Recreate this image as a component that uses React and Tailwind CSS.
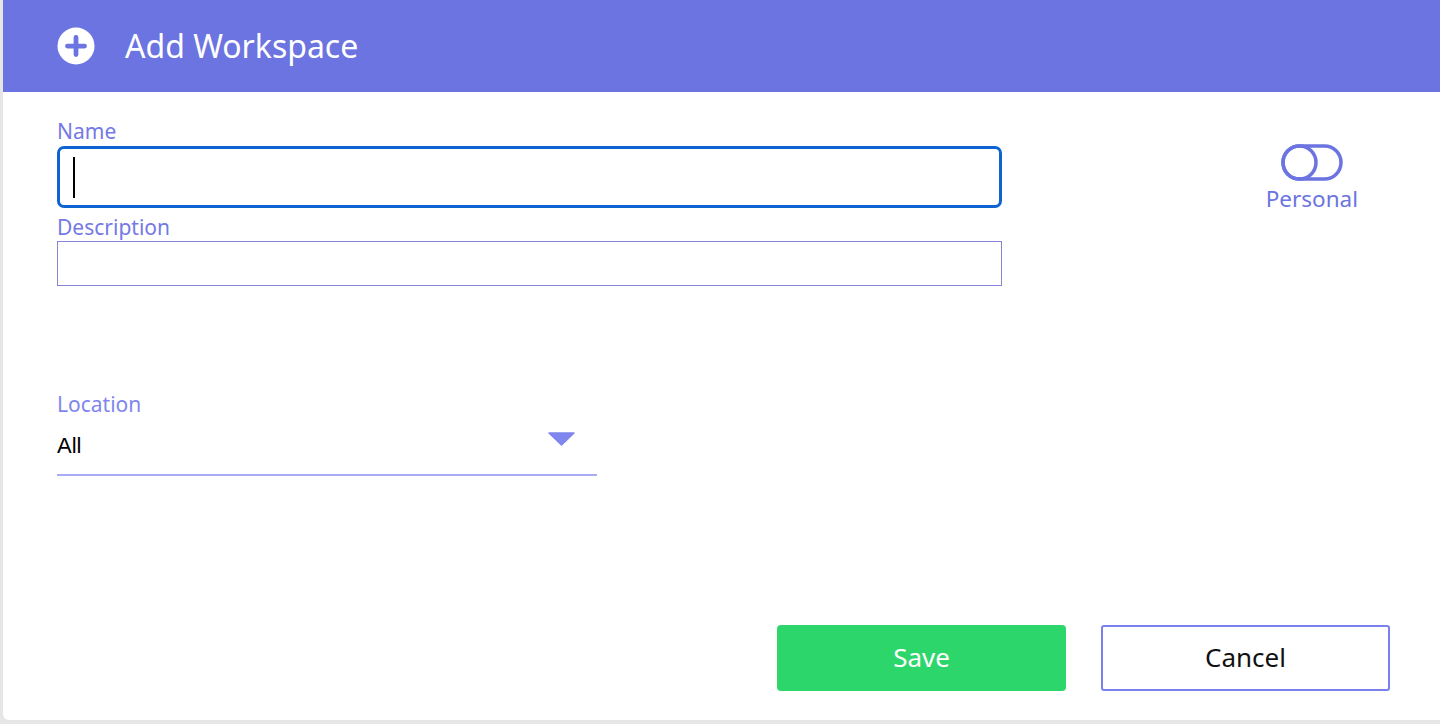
import React from "react";

export default function App() {
  return (
    <div className="w-[1440px] h-[724px] bg-[#e6e6e6] overflow-hidden" style={{ fontFamily: '"Noto Sans", "Open Sans", sans-serif' }}>
      <div className="ml-[3px] w-[1437px] h-[720px] bg-white rounded-bl-[6px] flex flex-col">
        <div className="h-[92px] bg-[#6b74e0] flex items-center pl-[54px] shrink-0">
          <svg width="38" height="38" viewBox="0 0 40 40">
            <circle cx="20" cy="20" r="19.5" fill="white" />
            <path d="M20 11v18M11 20h18" stroke="#6b74e0" strokeWidth="5" strokeLinecap="round" />
          </svg>
          <span className="ml-[30px] text-white text-[32px] leading-none">Add Workspace</span>
        </div>
        <div className="flex-1 flex flex-col px-[54px] relative">
          <div className="flex">
            <div className="w-[945px]">
              <div className="mt-[28px] text-[21px] leading-[23px] text-[#7479e6]">Name</div>
              <div className="mt-[3px] h-[62px] border-[3px] border-[#0c63d1] rounded-[7px] flex items-center pl-[13px]">
                <div className="w-[2px] h-[41px] bg-black" />
              </div>
              <div className="mt-[8px] text-[21px] leading-[23px] text-[#7479e6]">Description</div>
              <div className="mt-[2px] h-[45px] border border-[#8585d8]" />
            </div>
            <div className="flex-1 flex flex-col items-end pr-[28px] pt-[52px]">
              <div className="flex flex-col items-center">
                <svg width="62" height="37" viewBox="0 0 62 37">
                  <rect x="2" y="2" width="58" height="33" rx="16.5" fill="none" stroke="#6b74e0" strokeWidth="3.5" />
                  <circle cx="18.5" cy="18.5" r="16.5" fill="none" stroke="#6b74e0" strokeWidth="3.5" />
                </svg>
                <span className="mt-[5px] text-[22.5px] leading-[26px] text-[#6b74e0]">Personal</span>
              </div>
            </div>
          </div>
          <div className="mt-[107px] w-[540px]">
            <div className="text-[21px] leading-[23px] text-[#7f86ee]">Location</div>
            <div className="relative h-[60px] border-b-2 border-[#a8acf4]">
              <span className="absolute left-0 top-[17px] text-[22px] leading-[26px] text-black" style={{ fontFamily: '"Liberation Sans", Arial, sans-serif' }}>All</span>
              <svg className="absolute left-[491px] top-[16px]" width="27" height="14" viewBox="0 0 27 14">
                <path d="M1 1h25L13.5 13z" fill="#7f86ee" stroke="#7f86ee" strokeWidth="1.5" strokeLinejoin="round" />
              </svg>
            </div>
          </div>
          <div className="absolute right-[50px] bottom-[29px] flex gap-[35px]">
            <button className="w-[289px] h-[66px] bg-[#2dd66b] rounded-[4px] text-white text-[26px] pb-[2px]">Save</button>
            <button className="w-[289px] h-[66px] bg-white border-2 border-[#7b80ee] rounded-[3px] text-[#111] text-[26px] pb-[2px]">Cancel</button>
          </div>
        </div>
      </div>
    </div>
  );
}
